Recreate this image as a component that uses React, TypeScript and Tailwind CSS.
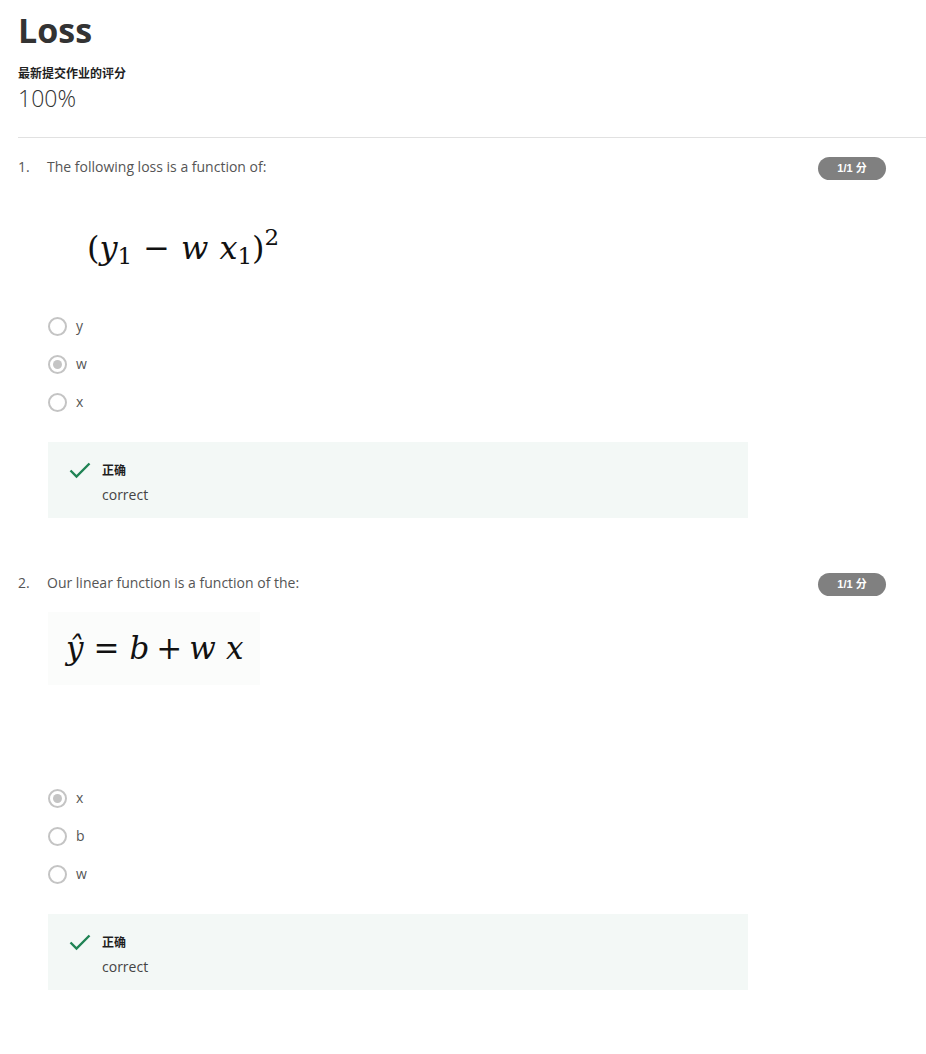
import React from "react";

const Radio = ({ checked, label }: { checked?: boolean; label: string }) => (
  <div className="flex h-[38px] items-center">
    <div className="ml-[30px] flex h-[19px] w-[19px] items-center justify-center rounded-full border-2 border-[#c4c4c4] bg-white">
      {checked && <div className="h-[9px] w-[9px] rounded-full bg-[#c4c4c4]" />}
    </div>
    <span className="ml-[9px] text-[14px] leading-[20px] text-[#555]">{label}</span>
  </div>
);

const Feedback = () => (
  <div className="ml-[30px] flex h-[76px] w-[700px] bg-[#f3f8f6] pl-[21px] pt-[20px]">
    <svg width="22" height="17" viewBox="0 0 22 17" className="mt-[0px]">
      <path d="M1.5 8.5 L7.5 14.5 L20.5 1.5" fill="none" stroke="#1f8354" strokeWidth="2.4" />
    </svg>
    <div className="ml-[11px] flex flex-col">
      <span className="text-[12px] font-bold leading-[18px] text-[#1f1f1f]" style={{ fontFamily: "'Open Sans','Noto Sans CJK SC',sans-serif" }}>正确</span>
      <span className="mt-[5px] text-[14px] leading-[20px] text-[#444]">correct</span>
    </div>
  </div>
);

const Header = ({ n, text }: { n: string; text: string }) => (
  <div className="flex h-[24px] items-center pr-[40px]">
    <span className="-mt-[3px] w-[29px] text-[14px] leading-[20px] text-[#555]">{n}</span>
    <span className="-mt-[3px] flex-1 text-[14px] leading-[20px] text-[#555]">{text}</span>
    <span className="flex h-[23px] w-[68px] items-center justify-center rounded-full bg-[#808080] text-[11px] font-bold text-white" style={{ fontFamily: "'Liberation Sans','Noto Sans CJK SC',sans-serif" }}>
      1/1 分
    </span>
  </div>
);

const M = "font-['DejaVu_Serif'] text-[#111]";

export default function App() {
  return (
    <div className="min-h-[1054px] w-full bg-white pl-[18px] font-['Open_Sans','Noto_Sans_CJK_SC',sans-serif]">
      <h1 className="pt-[8px] text-[34px] font-bold leading-[44px] text-[#333]">Loss</h1>
      <div className="mt-[14px] text-[12px] font-bold leading-[15px] text-[#1f1f1f]">最新提交作业的评分</div>
      <div className="mt-[2px] text-[23px] font-light leading-[30px] text-[#333]">100%</div>
      <div className="mt-[24px] h-px bg-[#e1e1e1]" />

      <div className="mt-[18px]">
        <Header n="1." text="The following loss is a function of:" />
        <div className={`mt-[30px] ml-[69px] flex h-[76px] items-center text-[32px] ${M}`}>
          <span>(</span>
          <span className="italic">y</span>
          <span className="relative top-[8px] text-[23px]">1</span>
          <span className="mx-[11px]">−</span>
          <span className="italic">w</span>
          <span className="ml-[11px] italic">x</span>
          <span className="relative top-[8px] text-[23px]">1</span>
          <span>)</span>
          <span className="relative -top-[11px] text-[23px]">2</span>
        </div>
        <div className="mt-[21px]">
          <Radio label="y" />
          <Radio label="w" checked />
          <Radio label="x" />
        </div>
        <div className="mt-[21px]">
          <Feedback />
        </div>
      </div>

      <div className="mt-[54px]">
        <Header n="2." text="Our linear function is a function of the:" />
        <div className={`mt-[16px] ml-[30px] flex h-[73px] w-[212px] items-center bg-[#fbfcfb] pl-[18px] text-[31px] ${M}`}>
          <span className="italic">ŷ</span>
          <span className="mx-[10px]">=</span>
          <span className="italic">b</span>
          <span className="mx-[7px]">+</span>
          <span className="italic">w</span>
          <span className="ml-[10px] italic">x</span>
        </div>
        <div className="mt-[94px]">
          <Radio label="x" checked />
          <Radio label="b" />
          <Radio label="w" />
        </div>
        <div className="mt-[21px]">
          <Feedback />
        </div>
      </div>
    </div>
  );
}
